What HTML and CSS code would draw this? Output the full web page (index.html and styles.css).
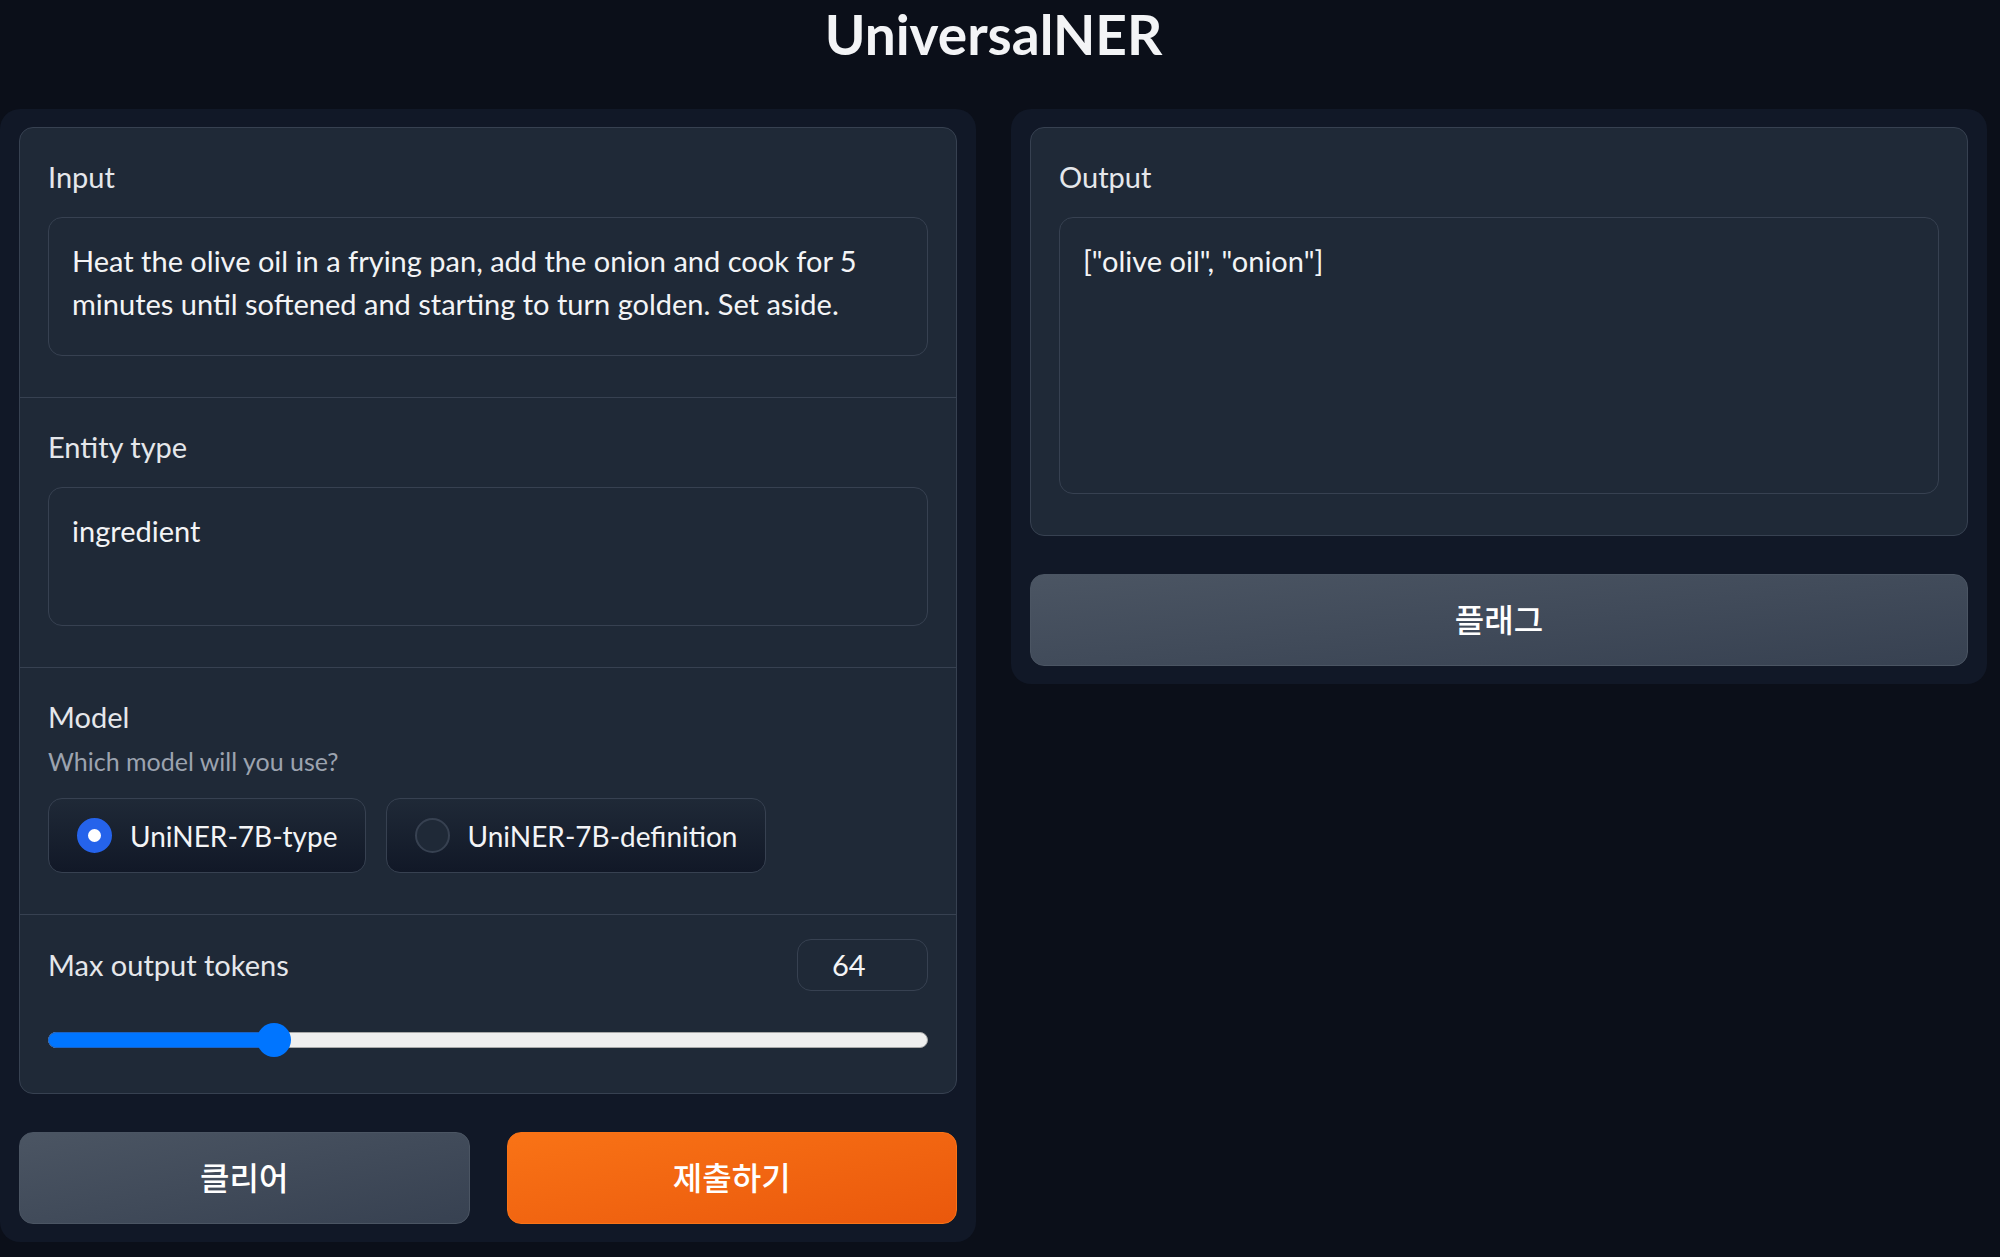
FILE: index.html
```html
<!DOCTYPE html>
<html lang="en">
<head>
  <meta charset="UTF-8" />
  <meta name="viewport" content="width=device-width, initial-scale=1.0"/>
  <title>UniversalNER</title>
  <link rel="stylesheet" href="styles.css">
</head>
<body>

  <h1 class="app-title">UniversalNER</h1>

  <main class="columns">

    <!-- left: inputs -->
    <section class="panel">
      <div class="form-card">
        <div class="field">
          <label class="field-label">Input</label>
          <div class="text-box">Heat the olive oil in a frying pan, add the onion and cook for 5 minutes until softened and starting to turn golden. Set aside.</div>
        </div>

        <div class="field">
          <label class="field-label">Entity type</label>
          <div class="text-box">ingredient</div>
        </div>

        <div class="field">
          <label class="field-label">Model</label>
          <p class="field-info">Which model will you use?</p>
          <div class="radio-group">
            <div class="radio-item">
              <span class="radio-dot checked"></span>
              <span>UniNER-7B-type</span>
            </div>
            <div class="radio-item">
              <span class="radio-dot"></span>
              <span>UniNER-7B-definition</span>
            </div>
          </div>
        </div>

        <div class="field field-slider">
          <div class="slider-head">
            <label class="field-label">Max output tokens</label>
            <div class="number-box">64</div>
          </div>
          <div class="slider" style="--value: 0.247">
            <div class="slider-track"></div>
            <div class="slider-fill"></div>
            <div class="slider-thumb"></div>
          </div>
        </div>
      </div>

      <div class="button-row">
        <button class="btn btn-secondary">클리어</button>
        <button class="btn btn-primary">제출하기</button>
      </div>
    </section>

    <!-- right: result -->
    <section class="panel">
      <div class="form-card">
        <div class="field">
          <label class="field-label">Output</label>
          <div class="text-box text-box-tall">["olive oil", "onion"]</div>
        </div>
      </div>
      <button class="btn btn-secondary">플래그</button>
    </section>

  </main>

</body>
</html>
```

FILE: styles.css
```css
/* Reset + Font */
body {
  margin: 0;
  padding-right: 13px;
  background: #0b0f19;
  color: #f3f4f6;
  font-family: 'Lato', 'Noto Sans CJK KR', sans-serif;
}

.app-title {
  margin: 0;
  font-size: 55px;
  line-height: 69px;
  font-weight: 700;
  text-align: center;
  color: #f3f4f6;
}

.columns {
  display: flex;
  gap: 35px;
  align-items: flex-start;
  margin-top: 40px;
}

.panel {
  flex: 1;
  display: flex;
  flex-direction: column;
  gap: 38px;
  padding: 18px 19px;
  background: #111827;
  border-radius: 20px;
}

.form-card {
  background: #1f2937;
  border: 1px solid #374151;
  border-radius: 14px;
  overflow: hidden;
}

.field {
  padding: 27px 28px 41px;
  border-bottom: 1px solid #374151;
}

.field:last-child {
  border-bottom: none;
}

.field-label {
  display: block;
  font-size: 29px;
  line-height: 44px;
  color: #e5e7eb;
}

.field-info {
  margin: 3px 0 0;
  font-size: 25px;
  line-height: 38px;
  color: #9ca3af;
}

.text-box {
  box-sizing: border-box;
  height: 139px;
  margin-top: 18px;
  padding: 21px 23px;
  border: 1px solid #374151;
  border-radius: 14px;
  font-size: 29px;
  line-height: 43px;
  color: #f3f4f6;
}

.text-box-tall {
  height: 277px;
}

/* radio buttons */
.radio-group {
  display: flex;
  gap: 20px;
  margin-top: 18px;
}

.radio-item {
  box-sizing: border-box;
  display: inline-flex;
  align-items: center;
  gap: 18px;
  height: 75px;
  padding: 0 27px 0 28px;
  border: 1px solid #374151;
  border-radius: 14px;
  background: linear-gradient(to top, #111827, #1f2937);
  font-size: 28px;
  color: #f3f4f6;
}

.radio-dot {
  box-sizing: border-box;
  width: 35px;
  height: 35px;
  border-radius: 50%;
  border: 2px solid #374151;
  background: #1f2937;
}

.radio-dot.checked {
  border: 11px solid #2563eb;
  background: #ffffff;
}

/* slider */
.field-slider {
  padding-top: 24px;
  padding-bottom: 36px;
}

.slider-head {
  display: flex;
  justify-content: space-between;
  align-items: center;
}

.number-box {
  box-sizing: border-box;
  width: 131px;
  height: 52px;
  padding-left: 34px;
  border: 1px solid #374151;
  border-radius: 14px;
  font-size: 29px;
  line-height: 50px;
}

.slider {
  position: relative;
  height: 34px;
  margin-top: 32px;
}

.slider-track,
.slider-fill {
  position: absolute;
  top: 9px;
  left: 0;
  height: 16px;
  box-sizing: border-box;
  border-radius: 8px;
}

.slider-track {
  right: 0;
  background: #efefef;
  border: 1px solid #a9a9a9;
}

.slider-fill {
  width: calc(var(--value) * (100% - 34px) + 17px);
  background: #0075ff;
  border: 1px solid #1a62c4;
}

.slider-thumb {
  position: absolute;
  top: 0;
  left: calc(var(--value) * (100% - 34px));
  width: 34px;
  height: 34px;
  border-radius: 50%;
  background: #0075ff;
}

/* buttons */
.button-row {
  display: grid;
  grid-template-columns: 1fr 1fr;
  gap: 37px;
}

.btn {
  height: 92px;
  padding: 0 0 5px;
  border-radius: 14px;
  font-family: 'Noto Sans CJK KR', sans-serif;
  font-size: 32px;
  font-weight: 500;
  color: #ffffff;
  cursor: pointer;
}

.btn-secondary {
  background: linear-gradient(to bottom right, #4b5563, #374151);
  border: 1px solid #4b5563;
}

.btn-primary {
  background: linear-gradient(to bottom right, #f97316, #ea580c);
  border: 1px solid #f97316;
}
```
